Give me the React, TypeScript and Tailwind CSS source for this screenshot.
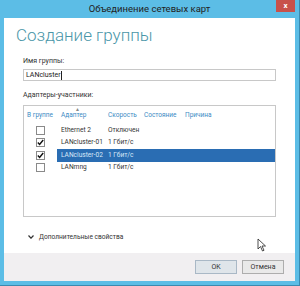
import React from 'react';

const rows = [
  { checked: false, name: 'Ethernet 2', speed: 'Отключен', selected: false },
  { checked: true, name: 'LANcluster-01', speed: '1 Гбит/с', selected: false },
  { checked: true, name: 'LANcluster-02', speed: '1 Гбит/с', selected: true },
  { checked: false, name: 'LANmng', speed: '1 Гбит/с', selected: false },
];

const Check: React.FC<{ on: boolean }> = ({ on }) => (
  <span className="w-[9px] h-[9px] border border-[#8a8a8a] bg-white flex items-center justify-center">
    {on && (
      <svg width="7" height="7" viewBox="0 0 7 7">
        <path d="M0.8 3.6 L2.6 5.4 L6.2 1" stroke="#111" strokeWidth="1.4" fill="none" />
      </svg>
    )}
  </span>
);

export default function App() {
  return (
    <div
      className="w-[300px] h-[286px] bg-[#5cbde6] flex flex-col border-r border-b border-[#3a8ab0] overflow-hidden whitespace-nowrap"
      style={{ fontFamily: 'Roboto, "Noto Sans", sans-serif' }}
    >
      {/* title bar */}
      <div className="relative h-[18px] flex items-center justify-center shrink-0">
        <span className="text-[9.5px] text-[#222] leading-none">Объединение сетевых карт</span>
        <span className="absolute right-[4px] top-0 w-[19px] h-[12px] bg-[#c8514b] flex items-center justify-center text-white text-[8px] font-bold leading-none">
          x
        </span>
      </div>

      <div className="flex-1 mx-[4px] mb-[4px] bg-white flex flex-col">
        <div className="flex-1 flex flex-col px-[19px] relative">
          <h1 className="text-[17px] font-light text-[#4a96a8] leading-none mt-[9px] ml-[-7px]">Создание группы</h1>

          <div className="text-[7px] text-[#333] mt-[14px] leading-none">Имя группы:</div>
          <div className="mt-[4px] h-[12px] border border-[#c8c8c8] flex items-center px-[2px]">
            <span className="text-[7px] text-[#222] leading-none">LANcluster</span>
            <span className="w-px h-[9px] bg-[#222]" />
          </div>

          <div className="text-[7px] text-[#333] mt-[11px] leading-none">Адаптеры-участники:</div>
          <div className="mt-[6px] h-[112px] border border-[#c8c8c8] flex flex-col">
            <div className="flex items-end h-[12px] text-[6.5px] text-[#3c8bc4] leading-none">
              <span className="w-[37px] pl-[3px]">В группе</span>
              <span className="w-[47px] relative">
                Адаптер
                <span className="absolute left-[14px] top-[-5px] text-[5px] text-[#888]">▲</span>
              </span>
              <span className="w-[36px]">Скорость</span>
              <span className="w-[41px]">Состояние</span>
              <span>Причина</span>
            </div>
            <div className="mt-[6px] flex flex-col">
              {rows.map((r) => (
                <div key={r.name} className="flex items-center h-[12.5px] text-[6.6px] leading-none">
                  <span className="w-[33px] flex justify-center">
                    <Check on={r.checked} />
                  </span>
                  <span
                    className={`flex-1 flex items-center h-full pl-[4px] ${
                      r.selected ? 'bg-[#2a6db3] text-[#d8e8f8]' : 'text-[#333]'
                    }`}
                  >
                    <span className="w-[47px] shrink-0">{r.name}</span>
                    <span>{r.speed}</span>
                  </span>
                </div>
              ))}
            </div>
          </div>

          <div className="flex items-center mt-[17px] ml-[5px] gap-[5px] text-[6.6px] text-[#333] leading-none">
            <svg width="6" height="4" viewBox="0 0 6 4">
              <path d="M0.5 0.5 L3 3.2 L5.5 0.5" stroke="#333" strokeWidth="1.2" fill="none" />
            </svg>
            Дополнительные свойства
          </div>

          <svg className="absolute left-[253px] top-[220px]" width="10" height="14" viewBox="0 0 10 14">
            <path d="M1 1 L1 11 L3.5 8.5 L5.5 13 L7 12.3 L5 8 L8.5 8 Z" fill="#fff" stroke="#222" strokeWidth="0.8" />
          </svg>
        </div>

        <div className="h-[28px] bg-[#f1eff1] flex items-center justify-end gap-[5px] pr-[11px] shrink-0">
          <button className="w-[42px] h-[14px] border border-[#a9b8c6] bg-[#dfe5ea] text-[7px] text-[#333] leading-none">
            OK
          </button>
          <button className="w-[42px] h-[14px] border border-[#adadad] bg-[#e9e9e9] text-[7px] text-[#333] leading-none">
            Отмена
          </button>
        </div>
      </div>
    </div>
  );
}
